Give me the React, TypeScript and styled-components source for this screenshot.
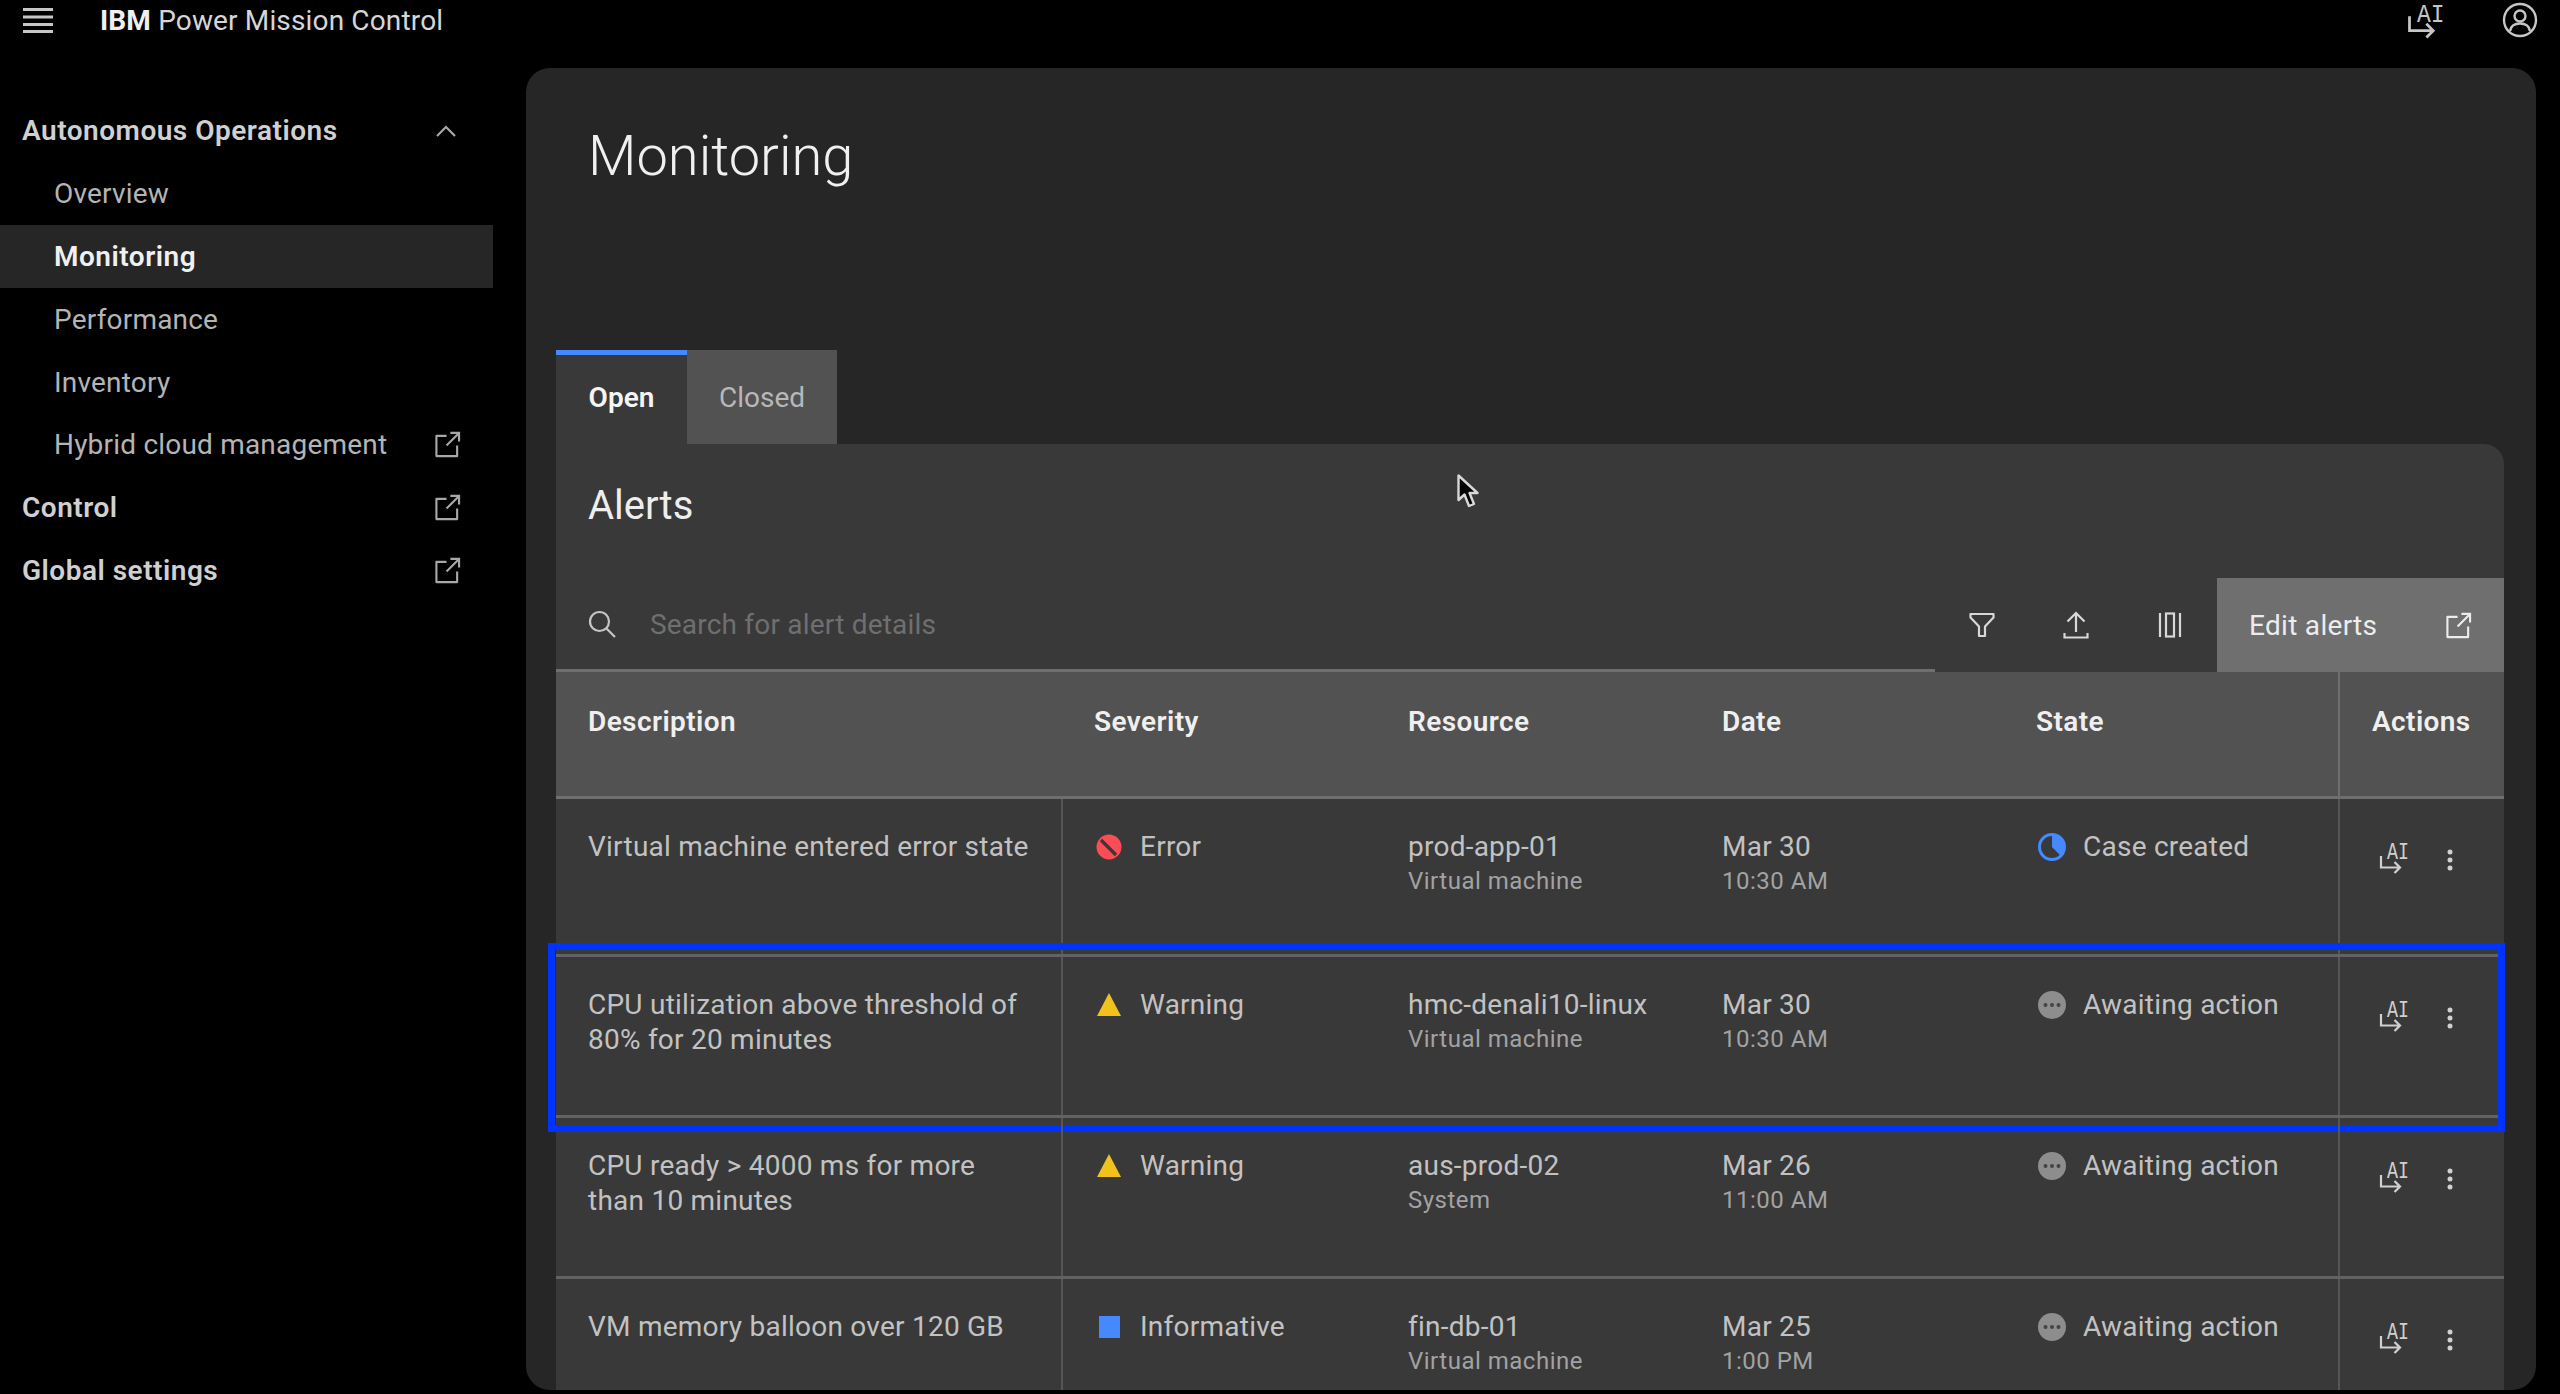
import React from "react";
import styled, { createGlobalStyle } from "styled-components";

const Global = createGlobalStyle`
  html, body { margin: 0; padding: 0; background: #000; }
  * { box-sizing: border-box; }
  body { font-family: Roboto, "Noto Sans", sans-serif; }
`;

const Page = styled.div`
  position: relative;
  width: 2560px;
  height: 1394px;
  background: #000;
  overflow: hidden;
  display: flex;
  flex-direction: column;
`;

const TopBar = styled.header`
  height: 68px;
  flex: none;
  display: flex;
  align-items: flex-start;
  color: #e0e0e0;
`;

const Hamburger = styled.div`
  width: 100px;
  height: 40px;
  padding-left: 23px;
  display: flex;
  align-items: center;
`;

const Brand = styled.div`
  flex: 1;
  height: 40px;
  line-height: 42px;
  font-size: 28px;
  color: #d6d6d6;
  letter-spacing: 0.15px;
  b { font-weight: 700; color: #f0f0f0; }
`;

const TopIcon = styled.div<{ $w: number; $mr: number }>`
  width: ${(p) => p.$w}px;
  margin-right: ${(p) => p.$mr}px;
  height: 40px;
  display: flex;
  align-items: center;
  color: #c6c6c6;
`;

const Body = styled.div`
  flex: 1;
  display: flex;
  min-height: 0;
`;

const Sidebar = styled.nav`
  width: 526px;
  flex: none;
  padding-top: 31.5px;
`;

const NavRow = styled.div<{ $level: number; $active?: boolean }>`
  width: 493px;
  height: 62.8px;
  display: flex;
  align-items: center;
  justify-content: space-between;
  padding: 0 32px 0 ${(p) => (p.$level === 0 ? 22 : 54)}px;
  font-size: 28px;
  letter-spacing: ${(p) => (p.$level === 0 || p.$active ? 0.5 : 0.2)}px;
  font-weight: ${(p) => (p.$level === 0 || p.$active ? 600 : 400)};
  color: ${(p) => (p.$active ? "#f0f0f0" : p.$level === 0 ? "#d0d0d0" : "#b4b4b4")};
  background: ${(p) => (p.$active ? "#262626" : "transparent")};
`;

const NavGlyph = styled.span`
  display: flex;
  color: #a8a8a8;
`;

const ChevronGlyph = styled(NavGlyph)`
  margin-right: 5px;
`;

const Main = styled.main`
  flex: none;
  width: 2010px;
  height: 1322px;
  background: #262626;
  border-radius: 24px;
  padding: 0 32px 0 30px;
  overflow: hidden;
`;

const Title = styled.h1`
  margin: 0;
  padding: 56px 0 0 32px;
  height: 282px;
  font-size: 56px;
  line-height: 64px;
  font-weight: 300;
  color: #f0f0f0;
`;

const Tabs = styled.div`
  display: flex;
  height: 94px;
`;

const Tab = styled.div<{ $active?: boolean }>`
  width: ${(p) => (p.$active ? 131 : 150)}px;
  padding-bottom: ${(p) => (p.$active ? 5 : 0)}px;
  border-top: ${(p) => (p.$active ? "5px solid #4589ff" : "none")};
  background: ${(p) => (p.$active ? "#393939" : "#525252")};
  color: ${(p) => (p.$active ? "#f4f4f4" : "#b8b8b8")};
  font-size: 28px;
  font-weight: ${(p) => (p.$active ? 600 : 400)};
  display: flex;
  align-items: center;
  justify-content: center;
`;

const Card = styled.section`
  background: #393939;
  border-top-right-radius: 20px;
`;

const CardTitle = styled.h2`
  margin: 0;
  height: 134px;
  padding: 39px 0 0 32px;
  font-size: 40px;
  line-height: 46px;
  font-weight: 400;
  color: #eeeeee;
`;

const Toolbar = styled.div`
  display: flex;
  height: 94px;
`;

const Search = styled.div`
  width: 1379px;
  display: flex;
  align-items: center;
  gap: 34px;
  padding-left: 32px;
  border-bottom: 3px solid #6f6f6f;
  font-size: 28px;
  color: #6f6f6f;
  letter-spacing: 0.2px;
`;

const SearchText = styled.span`
  padding-top: 2px;
`;

const ToolIcon = styled.div`
  width: 94px;
  display: flex;
  align-items: center;
  justify-content: center;
  color: #d8d8d8;
`;

const EditButton = styled.div`
  width: 287px;
  background: #6f6f6f;
  display: flex;
  align-items: center;
  justify-content: space-between;
  padding: 0 32px;
  font-size: 28px;
  letter-spacing: 0.3px;
  color: #ececec;
`;

const cols = "505px 315px 314px 314px 334px 166px";

const HeadRow = styled.div`
  display: grid;
  grid-template-columns: ${cols};
  height: 127px;
  background: #525252;
  border-bottom: 3px solid #6f6f6f;
`;

const HeadCell = styled.div<{ $last?: boolean; $shift?: boolean }>`
  padding: 32px 0 0 ${(p) => (p.$shift ? 33 : 32)}px;
  font-size: 28px;
  line-height: 36px;
  font-weight: 600;
  letter-spacing: 0.4px;
  color: #efefef;
  border-left: ${(p) => (p.$last ? "2px solid #6f6f6f" : "none")};
`;

const Row = styled.div<{ $h: number }>`
  position: relative;
  display: grid;
  grid-template-columns: ${cols};
  height: ${(p) => p.$h}px;
  border-bottom: 3px solid #626262;
`;

const Cell = styled.div<{ $line?: boolean }>`
  padding: 30px 24px 0 32px;
  font-size: 28px;
  line-height: 35px;
  letter-spacing: 0.24px;
  color: #c2c2c2;
  border-left: ${(p) => (p.$line ? "2px solid #565656" : "none")};
`;

const IconText = styled.div<{ $gap: number }>`
  display: flex;
  align-items: center;
  gap: ${(p) => p.$gap}px;
  height: 35px;
`;

const StateWrap = styled.div`
  margin-left: 1px;
`;

const Sub = styled.div`
  font-size: 24px;
  letter-spacing: 0.5px;
  color: #a2a2a2;
`;

const ActionsCell = styled.div`
  border-left: 2px solid #565656;
  padding: 44px 0 0 39px;
  display: flex;
  align-items: flex-start;
  gap: 38px;
  color: #d0d0d0;
`;

const Kebab = styled.svg`
  margin-top: 6px;
`;

const Highlight = styled.div`
  position: absolute;
  left: -8px;
  right: -1px;
  top: -14px;
  bottom: -17px;
  border: 7px solid #0033ff;
  pointer-events: none;
`;

const Cursor = styled.svg`
  position: absolute;
  left: 1456px;
  top: 473px;
`;

const AiSvg = styled.svg<{ $s: number }>`
  flex: none;
  margin: ${(p) => -8 * p.$s}px ${(p) => -6 * p.$s}px ${(p) => -2 * p.$s}px 0;
`;

const External = ({ size = 27 }: { size?: number }) => (
  <svg width={size} height={size} viewBox="0 0 28 28" fill="none" stroke="currentColor" strokeWidth="2.2">
    <path d="M13 5H2.5V26H24V15" strokeLinejoin="round" />
    <path d="M13 15L26 2M17 2H26V11" />
  </svg>
);

const AiIcon = ({ s = 1, fs = 23, by = 16 }: { s?: number; fs?: number; by?: number }) => (
  <AiSvg $s={s} width={36 * s} height={42 * s} viewBox="0 -8 36 42" fill="none">
    <path d="M2 13V24.5H21M15.5 19L21 24.5L15.5 30" stroke="currentColor" strokeWidth="2.2" />
    <text
      x="8"
      y={by}
      fontFamily="'Liberation Mono', monospace"
      fontSize={fs}
      textLength="22"
      lengthAdjust="spacingAndGlyphs"
      fill="currentColor"
    >
      AI
    </text>
  </AiSvg>
);

const Severity = ({ kind }: { kind: string }) => {
  if (kind === "Error")
    return (
      <svg width="28" height="28" viewBox="0 0 28 28">
        <circle cx="14" cy="14" r="12.5" fill="#fa4d56" />
        <path d="M6 7L21 22" stroke="#393939" strokeWidth="3.4" />
      </svg>
    );
  if (kind === "Warning")
    return (
      <svg width="28" height="28" viewBox="0 0 28 28">
        <path d="M14 2L26 25H2Z" fill="#f1c21b" />
      </svg>
    );
  return (
    <svg width="28" height="28" viewBox="0 0 28 28">
      <rect x="4" y="3" width="21" height="22" fill="#4589ff" />
    </svg>
  );
};

const StateIcon = ({ kind }: { kind: string }) =>
  kind === "Case created" ? (
    <svg width="30" height="30" viewBox="0 0 30 30">
      <circle cx="15" cy="15" r="12.5" fill="none" stroke="#4589ff" strokeWidth="3" />
      <path d="M15 15V2.5A12.5 12.5 0 0 1 24 24Z" fill="#4589ff" />
    </svg>
  ) : (
    <svg width="30" height="30" viewBox="0 0 30 30">
      <circle cx="15" cy="15" r="14" fill="#8d8d8d" />
      <circle cx="8.5" cy="15" r="2" fill="#444" />
      <circle cx="15" cy="15" r="2" fill="#444" />
      <circle cx="21.5" cy="15" r="2" fill="#444" />
    </svg>
  );

const rows = [
  {
    h: 158,
    desc: ["Virtual machine entered error state"],
    sev: "Error",
    res: "prod-app-01",
    type: "Virtual machine",
    date: "Mar 30",
    time: "10:30 AM",
    state: "Case created",
  },
  {
    h: 161,
    highlighted: true,
    desc: ["CPU utilization above threshold of", "80% for 20 minutes"],
    sev: "Warning",
    res: "hmc-denali10-linux",
    type: "Virtual machine",
    date: "Mar 30",
    time: "10:30 AM",
    state: "Awaiting action",
  },
  {
    h: 161,
    desc: ["CPU ready > 4000 ms for more", "than 10 minutes"],
    sev: "Warning",
    res: "aus-prod-02",
    type: "System",
    date: "Mar 26",
    time: "11:00 AM",
    state: "Awaiting action",
  },
  {
    h: 161,
    desc: ["VM memory balloon over 120 GB"],
    sev: "Informative",
    res: "fin-db-01",
    type: "Virtual machine",
    date: "Mar 25",
    time: "1:00 PM",
    state: "Awaiting action",
  },
];

const nav = [
  { label: "Autonomous Operations", level: 0, glyph: "chevron" },
  { label: "Overview", level: 1 },
  { label: "Monitoring", level: 1, active: true },
  { label: "Performance", level: 1 },
  { label: "Inventory", level: 1 },
  { label: "Hybrid cloud management", level: 1, glyph: "ext" },
  { label: "Control", level: 0, glyph: "ext" },
  { label: "Global settings", level: 0, glyph: "ext" },
];

export default function App() {
  return (
    <Page>
      <Global />
      <TopBar>
        <Hamburger>
          <svg width="30" height="27" viewBox="0 0 30 27" fill="#c6c6c6">
            <rect y="1" width="30" height="3" />
            <rect y="8.5" width="30" height="3" />
            <rect y="16" width="30" height="3" />
            <rect y="23" width="30" height="3" />
          </svg>
        </Hamburger>
        <Brand>
          <b>IBM</b> Power Mission Control
        </Brand>
        <TopIcon $w={36} $mr={59}>
          <AiIcon s={1.25} fs={21} by={17.6} />
        </TopIcon>
        <TopIcon $w={36} $mr={22}>
          <svg width="36" height="36" viewBox="0 0 36 36" fill="none" stroke="currentColor" strokeWidth="2.4">
            <circle cx="18" cy="18" r="16" />
            <circle cx="18" cy="14" r="5.5" />
            <path d="M8 29C9 23 13 21.5 18 21.5S27 23 28 29" />
          </svg>
        </TopIcon>
      </TopBar>
      <Body>
        <Sidebar>
          {nav.map((n) => (
            <NavRow key={n.label} $level={n.level} $active={n.active}>
              {n.label}
              {n.glyph === "ext" && (
                <NavGlyph>
                  <External />
                </NavGlyph>
              )}
              {n.glyph === "chevron" && (
                <ChevronGlyph>
                  <svg width="20" height="12" viewBox="0 0 20 12" fill="none" stroke="currentColor" strokeWidth="2.2">
                    <path d="M1 11L10 2L19 11" />
                  </svg>
                </ChevronGlyph>
              )}
            </NavRow>
          ))}
        </Sidebar>
        <Main>
          <Title>Monitoring</Title>
          <Tabs>
            <Tab $active>Open</Tab>
            <Tab>Closed</Tab>
          </Tabs>
          <Card>
            <CardTitle>Alerts</CardTitle>
            <Toolbar>
              <Search>
                <svg width="28" height="28" viewBox="0 0 28 28" fill="none" stroke="#c6c6c6" strokeWidth="2.2">
                  <circle cx="11.5" cy="11.5" r="9.5" />
                  <path d="M18.5 18.5L27 27" />
                </svg>
                <SearchText>Search for alert details</SearchText>
              </Search>
              <ToolIcon>
                <svg width="26" height="26" viewBox="0 0 26 26" fill="none" stroke="currentColor" strokeWidth="2.2">
                  <path d="M1.5 2H24.5V5.5L16 14.5V24H10V14.5L1.5 5.5Z" strokeLinejoin="round" />
                </svg>
              </ToolIcon>
              <ToolIcon>
                <svg width="26" height="28" viewBox="0 0 26 28" fill="none" stroke="currentColor" strokeWidth="2.2">
                  <path d="M13 21V2M4.5 10.5L13 2L21.5 10.5M1.5 22V26.5H24.5V22" />
                </svg>
              </ToolIcon>
              <ToolIcon>
                <svg width="24" height="26" viewBox="0 0 24 26" fill="none" stroke="currentColor" strokeWidth="2.2">
                  <path d="M2 1V25M22 1V25" />
                  <rect x="8" y="1.5" width="8" height="23" />
                </svg>
              </ToolIcon>
              <EditButton>
                Edit alerts
                <External />
              </EditButton>
            </Toolbar>
            <HeadRow>
              <HeadCell>Description</HeadCell>
              <HeadCell $shift>Severity</HeadCell>
              <HeadCell>Resource</HeadCell>
              <HeadCell>Date</HeadCell>
              <HeadCell>State</HeadCell>
              <HeadCell $last>Actions</HeadCell>
            </HeadRow>
            {rows.map((r) => (
              <Row key={r.res} $h={r.h}>
                <Cell>
                  {r.desc.map((d) => (
                    <div key={d}>{d}</div>
                  ))}
                </Cell>
                <Cell $line>
                  <IconText $gap={17}>
                    <Severity kind={r.sev} />
                    {r.sev}
                  </IconText>
                </Cell>
                <Cell>
                  {r.res}
                  <Sub>{r.type}</Sub>
                </Cell>
                <Cell>
                  {r.date}
                  <Sub>{r.time}</Sub>
                </Cell>
                <Cell>
                  <StateWrap>
                    <IconText $gap={16}>
                      <StateIcon kind={r.state} />
                      {r.state}
                    </IconText>
                  </StateWrap>
                </Cell>
                <ActionsCell>
                  <AiIcon />
                  <Kebab width="6" height="22" viewBox="0 0 6 22" fill="currentColor">
                    <circle cx="3" cy="3" r="2.5" />
                    <circle cx="3" cy="11" r="2.5" />
                    <circle cx="3" cy="19" r="2.5" />
                  </Kebab>
                </ActionsCell>
                {r.highlighted && <Highlight />}
              </Row>
            ))}
          </Card>
        </Main>
      </Body>
      <Cursor width="24" height="38" viewBox="0 0 24 38">
        <path
          d="M2.5 2.5V27L8.5 21.5L13 33L18 31L13.5 20H21.5Z"
          fill="#000"
          stroke="#d8d8d8"
          strokeWidth="2.4"
          strokeLinejoin="round"
        />
      </Cursor>
    </Page>
  );
}
